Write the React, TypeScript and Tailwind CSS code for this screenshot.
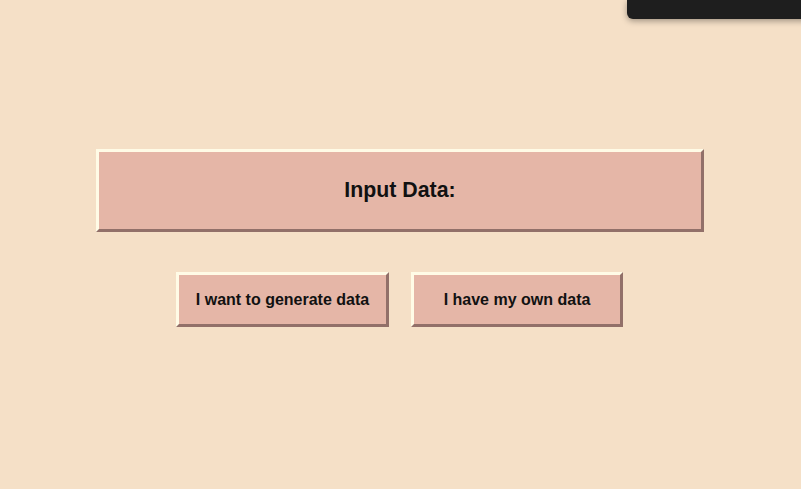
const font = { fontFamily: '"Liberation Sans", Arial, sans-serif' }

const bevel =
  "border-[3px] border-t-[#fffbe6] border-l-[#fffbe6] border-b-[#927069] border-r-[#927069] bg-[#e5b6a7] text-[#111]"

export default function App() {
  return (
    <div className="relative w-[801px] h-[489px] overflow-hidden bg-[#f5e0c7]" style={font}>
      {/* dark popover peeking in at the top right */}
      <div className="absolute top-0 left-[627px] w-[190px] h-[19px] rounded-bl-md bg-[#1e1e1e] shadow-[0_2px_6px_rgba(0,0,0,0.35)]" />

      <div className="w-[800px] flex flex-col items-center pt-[149px]">
        <div className={`${bevel} w-[608px] h-[83px] flex items-center justify-center`}>
          <h2 className="text-[21.33px] font-bold leading-none">Input Data:</h2>
        </div>

        <div className="flex gap-[22px] mt-[40px] pr-[1px]">
          <button className={`${bevel} w-[213px] h-[55px] text-[16px] font-bold`} style={font}>
            I want to generate data
          </button>
          <button className={`${bevel} w-[212px] h-[55px] text-[16px] font-bold`} style={font}>
            I have my own data
          </button>
        </div>
      </div>
    </div>
  )
}
